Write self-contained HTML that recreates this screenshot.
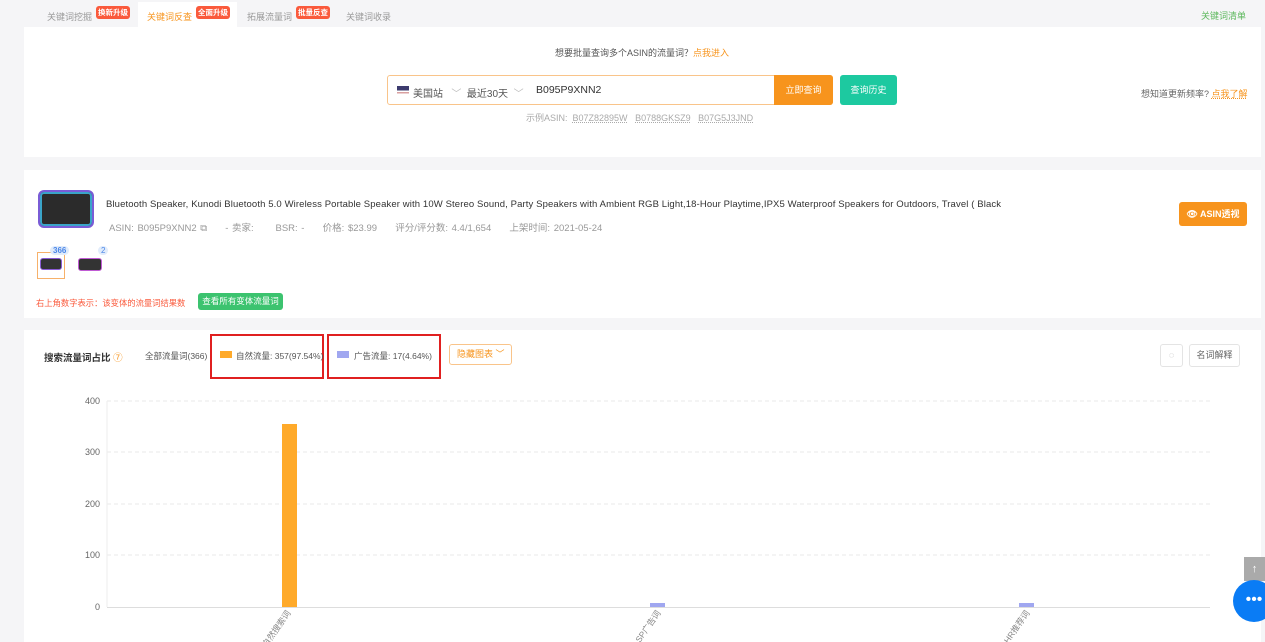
<!DOCTYPE html>
<html><head><meta charset="utf-8"><style>
*{box-sizing:border-box;margin:0;padding:0}
body{width:1265px;height:642px;overflow:hidden;background:#f5f5f7;font-family:"Liberation Sans","Noto Sans CJK SC",sans-serif;font-size:9px;color:#333;position:relative}
.a{position:absolute;white-space:nowrap}
.tag{position:absolute;background:#fa5a3c;color:#fff;font-size:7.5px;padding:1px 2px;border-radius:3px;font-weight:bold}
.panel{position:absolute;left:24px;width:1237px;background:#fff}
</style></head><body>
<div class="a" style="left:138px;top:2px;width:99px;height:26px;background:#fff"></div>
<div class="a" style="left:47px;top:10px;color:#999">关键词挖掘</div><div class="tag" style="left:96px;top:6px">换新升级</div>
<div class="a" style="left:147px;top:10px;color:#f7941d">关键词反查</div><div class="tag" style="left:196px;top:6px">全面升级</div>
<div class="a" style="left:247px;top:10px;color:#999">拓展流量词</div><div class="tag" style="left:296px;top:6px">批量反查</div>
<div class="a" style="left:346px;top:10px;color:#999">关键词收录</div>
<div class="a" style="left:1201px;top:9px;color:#5cb85c">关键词清单</div>

<div class="panel" style="top:27px;height:130px">
<div class="a" style="left:531px;top:19px;color:#555">想要批量查询多个ASIN的流量词？<span style="color:#f7941d">点我进入</span></div>
<div class="a" style="left:363px;top:48px;width:446px;height:30px;border:1px solid #f9c48a;border-radius:3px"></div>
<div class="a" style="left:373px;top:59px;width:12px;height:9px;background:linear-gradient(#3c3b6e 0 50%,transparent 50%),repeating-linear-gradient(#d9a0a0 0 1.5px,#fff 1.5px 3px)"></div>
<div class="a" style="left:389px;top:58px;color:#555;font-size:10px">美国站 &nbsp;&nbsp;<span style="color:#bbb">﹀</span>&nbsp; 最近30天 &nbsp;<span style="color:#bbb">﹀</span></div>
<div class="a" style="left:512px;top:57px;font-size:10.5px;color:#333">B095P9XNN2</div>
<div class="a" style="left:750px;top:48px;width:59px;height:30px;background:#f7941d;color:#fff;text-align:center;line-height:30px;border-radius:0 3px 3px 0">立即查询</div>
<div class="a" style="left:816px;top:48px;width:57px;height:30px;background:#1dc9a0;color:#fff;text-align:center;line-height:30px;border-radius:3px">查询历史</div>
<div class="a" style="left:502px;top:84px;color:#aaa;font-size:9px">示例ASIN: &nbsp;<u style="text-decoration:underline dotted">B07Z82895W</u> &nbsp; <u style="text-decoration:underline dotted">B0788GKSZ9</u> &nbsp; <u style="text-decoration:underline dotted">B07G5J3JND</u></div>
<div class="a" style="left:1117px;top:60px;color:#666">想知道更新频率? <span style="color:#f7941d;text-decoration:underline dotted">点我了解</span></div>
</div>

<div class="panel" style="top:170px;height:148px">
<div class="a" style="left:14px;top:20px;width:56px;height:38px;border-radius:6px;background:#2b2b2b;border:2px solid #7a5cd6;box-shadow:inset 0 0 0 2px #3aa4c8"></div>
<div class="a" style="left:82px;top:29px;font-size:9.5px;color:#333;letter-spacing:0.12px">Bluetooth Speaker, Kunodi Bluetooth 5.0 Wireless Portable Speaker with 10W Stereo Sound, Party Speakers with Ambient RGB Light,18-Hour Playtime,IPX5 Waterproof Speakers for Outdoors, Travel ( Black</div>
<div class="a" style="left:85px;top:50px;font-size:9.5px;color:#999;word-spacing:1px">ASIN: B095P9XNN2 ⧉ &nbsp;&nbsp;&nbsp; - 卖家: &nbsp;&nbsp;&nbsp;&nbsp; BSR: - &nbsp;&nbsp;&nbsp; 价格: $23.99 &nbsp;&nbsp;&nbsp; 评分/评分数: 4.4/1,654 &nbsp;&nbsp;&nbsp; 上架时间: 2021-05-24</div>
<div class="a" style="left:1155px;top:32px;width:68px;height:24px;background:#f7941d;color:#fff;border-radius:3px;line-height:24px;text-align:center;font-weight:bold">👁 ASIN透视</div>
<div class="a" style="left:13px;top:82px;width:28px;height:27px;border:1px solid #f7b16a"></div>
<div class="a" style="left:16px;top:88px;width:22px;height:12px;background:#333;border-radius:3px;border:1px solid #8a5bd4"></div>
<div class="a" style="left:54px;top:88px;width:24px;height:13px;background:#333;border-radius:3px;border:1px solid #c05bd4"></div>
<div class="a" style="left:26px;top:76px;background:#e1ecfb;color:#4a86e8;font-size:8px;padding:0 3px;border-radius:7px;font-weight:bold">366</div>
<div class="a" style="left:74px;top:76px;background:#e1ecfb;color:#4a86e8;font-size:8px;padding:0 3px;border-radius:7px">2</div>
<div class="a" style="left:12px;top:127px;color:#fa5a3c;font-size:8.3px">右上角数字表示：该变体的流量词结果数</div>
<div class="a" style="left:174px;top:123px;width:85px;height:17px;background:#3cc36f;color:#fff;border-radius:3px;font-size:8.5px;line-height:17px;text-align:center">查看所有变体流量词</div>
</div>

<div class="panel" style="top:330px;height:312px">
<div class="a" style="left:20px;top:20px;font-weight:bold;color:#333;font-size:9.5px">搜索流量词占比 <span style="color:#f7941d;font-weight:normal">⑦</span></div>
<div class="a" style="left:121px;top:20px;color:#555;font-size:8.5px">全部流量词(366)</div>
<div class="a" style="left:186px;top:4px;width:114px;height:45px;border:2px solid #e02020"></div>
<div class="a" style="left:196px;top:21px;width:12px;height:7px;background:#ffaa2a"></div>
<div class="a" style="left:212px;top:20px;color:#555;font-size:8.5px">自然流量: 357(97.54%)</div>
<div class="a" style="left:303px;top:4px;width:114px;height:45px;border:2px solid #e02020"></div>
<div class="a" style="left:313px;top:21px;width:12px;height:7px;background:#a0a7f0"></div>
<div class="a" style="left:330px;top:20px;color:#555;font-size:8.5px">广告流量: 17(4.64%)</div>
<div class="a" style="left:425px;top:14px;width:63px;height:21px;border:1px solid #f9c48a;border-radius:3px;color:#f7941d;line-height:19px;padding-left:7px">隐藏图表 ﹀</div>
<div class="a" style="left:1136px;top:14px;width:23px;height:23px;border:1px solid #e4e4e4;border-radius:3px;color:#999;text-align:center;line-height:21px">◌</div>
<div class="a" style="left:1165px;top:14px;width:51px;height:23px;border:1px solid #e4e4e4;border-radius:3px;color:#666;text-align:center;line-height:21px">名词解释</div>
</div>

<svg class="a" style="left:0;top:0" width="1265" height="642">
<g stroke="#e8e8e8" stroke-dasharray="4 3">
<line x1="107" y1="401" x2="1210" y2="401"/><line x1="107" y1="452" x2="1210" y2="452"/><line x1="107" y1="504" x2="1210" y2="504"/><line x1="107" y1="555" x2="1210" y2="555"/></g>
<line x1="107" y1="607.5" x2="1210" y2="607.5" stroke="#ddd"/>
<line x1="107" y1="401" x2="107" y2="607" stroke="#eee"/>
<g fill="#666" font-size="9" text-anchor="end" font-family="Liberation Sans">
<text x="100" y="404">400</text><text x="100" y="455">300</text><text x="100" y="507">200</text><text x="100" y="558">100</text><text x="100" y="610">0</text></g>
<rect x="282" y="424" width="15" height="183" fill="#ffaa2a"/>
<rect x="650" y="603" width="15" height="4" fill="#a0a7f0"/>
<rect x="1019" y="603" width="15" height="4" fill="#a0a7f0"/>
<g fill="#888" font-size="8.5" text-anchor="end" font-family="Liberation Sans,Noto Sans CJK SC,sans-serif">
<text transform="translate(291,613) rotate(-55)">自然搜索词</text>
<text transform="translate(661,613) rotate(-55)">SP广告词</text>
<text transform="translate(1030,613) rotate(-55)">HR推荐词</text></g>
</svg>
<div class="a" style="left:1244px;top:557px;width:21px;height:24px;background:#aaa;color:#fff;text-align:center;line-height:24px;font-size:11px">↑</div>
<div class="a" style="left:1233px;top:580px;width:42px;height:42px;border-radius:50%;background:#0a7cf5;color:#fff;text-align:center;line-height:40px;font-size:16px">•••</div>
</body></html>
